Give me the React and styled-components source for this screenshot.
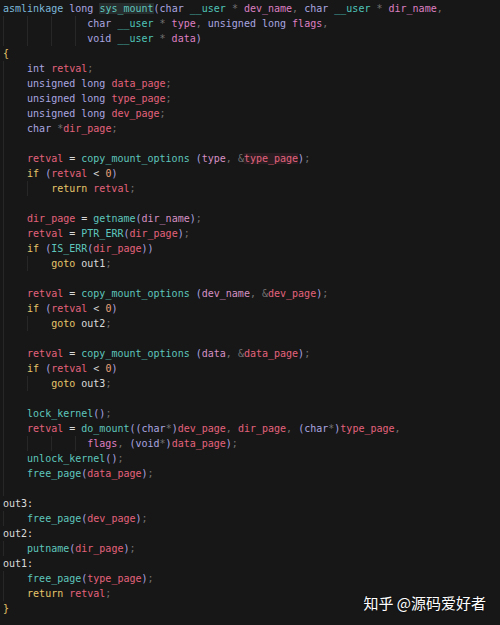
import React from "react";
import styled, { createGlobalStyle } from "styled-components";

const Global = createGlobalStyle`
  html, body { margin: 0; padding: 0; background: #171717; }
  body { width: 500px; height: 625px; overflow: hidden; }
`;

const COLORS = {
  a: "#7db8da",
  k: "#aaa6e0",
  u: "#4fc4b8",
  y: "#e6c66a",
  f: "#5ec6bc",
  pa: "#de7fc2",
  arg: "#d690c4",
  v: "#e3627c",
  l: "#dcdcdc",
  n: "#e8a47a",
  o: "#d8d8d8",
  p: "#aaa6e0",
  g: "#727272",
  t: "#cfcfcf",
};

const Frame = styled.div`
  position: relative;
  width: 500px;
  height: 625px;
  background: #171717;
  overflow: hidden;
`;

const Code = styled.div`
  display: flex;
  flex-direction: column;
  padding: 1px 0 0 3px;
  font-family: "DejaVu Sans Mono", "Liberation Mono", monospace;
  font-size: 10px;
  color: #cfcfcf;
`;

const Line = styled.div`
  height: 15px;
  line-height: 15px;
  white-space: pre;
`;

const Guide = styled.span`
  display: inline-block;
  vertical-align: top;
  height: 15px;
  width: ${(p) => p.$cols}ch;
  box-shadow: inset 1px 0 0 #272727;
`;

const Tok = styled.span`
  color: ${(p) => COLORS[p.$c] || "#cfcfcf"};
  background: ${(p) => p.$hl || "transparent"};
`;

const Watermark = styled.div`
  position: absolute;
  right: 14px;
  bottom: 12px;
  font-family: "Noto Sans CJK SC", "Noto Sans", sans-serif;
  font-size: 15px;
  line-height: 20px;
  color: #ffffff;
  text-shadow: 0 0 2px rgba(0, 0, 0, 0.7);
  white-space: pre;
`;

const SRC = [
  "asmlinkage long sys_mount(char __user * dev_name, char __user * dir_name,",
  "              char __user * type, unsigned long flags,",
  "              void __user * data)",
  "{",
  "    int retval;",
  "    unsigned long data_page;",
  "    unsigned long type_page;",
  "    unsigned long dev_page;",
  "    char *dir_page;",
  "    ",
  "    retval = copy_mount_options (type, &type_page);",
  "    if (retval < 0)",
  "        return retval;",
  "    ",
  "    dir_page = getname(dir_name);",
  "    retval = PTR_ERR(dir_page);",
  "    if (IS_ERR(dir_page))",
  "        goto out1;",
  "    ",
  "    retval = copy_mount_options (dev_name, &dev_page);",
  "    if (retval < 0)",
  "        goto out2;",
  "    ",
  "    retval = copy_mount_options (data, &data_page);",
  "    if (retval < 0)",
  "        goto out3;",
  "    ",
  "    lock_kernel();",
  "    retval = do_mount((char*)dev_page, dir_page, (char*)type_page,",
  "              flags, (void*)data_page);",
  "    unlock_kernel();",
  "    free_page(data_page);",
  "    ",
  "out3:",
  "    free_page(dev_page);",
  "out2:",
  "    putname(dir_page);",
  "out1:",
  "    free_page(type_page);",
  "    return retval;",
  "}",
];

const KW = new Set(["long", "char", "int", "unsigned", "void"]);
const YEL = new Set(["if", "return", "goto"]);
const PARAMS = new Set(["dev_name", "dir_name", "type", "flags", "data"]);
const VARS = new Set(["retval", "data_page", "type_page", "dev_page", "dir_page"]);

function tokenize(text, lineIdx) {
  const re = /([A-Za-z_][A-Za-z0-9_]*:?)|(\d+)|(\s+)|(.)/g;
  const out = [];
  let m;
  while ((m = re.exec(text))) {
    const s = m[0];
    let c = "t";
    let hl;
    if (m[1]) {
      const rest = text.slice(re.lastIndex);
      const isCall = /^\s*\(/.test(rest);
      if (s.endsWith(":")) c = "l";
      else if (s === "asmlinkage") c = "a";
      else if (s === "__user") c = "u";
      else if (KW.has(s)) c = "k";
      else if (YEL.has(s)) c = "y";
      else if (/^out\d$/.test(s)) c = "l";
      else if (VARS.has(s)) c = "v";
      else if (PARAMS.has(s)) c = lineIdx < 3 || s === "flags" ? "pa" : "arg";
      else if (isCall) c = "f";
      if (lineIdx === 0 && s === "sys_mount") hl = "#272c2c";
      if (lineIdx === 10 && s === "type_page") hl = "#2a1d22";
    } else if (m[2]) c = "n";
    else if (m[3]) c = "t";
    else if (s === "{" || s === "}") c = "y";
    else if (s === "(" || s === ")") c = "p";
    else if (s === "=" || s === "<") c = "o";
    else c = "g";
    out.push({ s, c, hl });
  }
  return out;
}

function CodeLine({ text, idx }) {
  const indent = text.length - text.trimStart().length;
  const body = text.slice(indent);
  const guides = [];
  for (let s = 0; s < indent; s += 4) {
    guides.push(<Guide key={s} $cols={Math.min(4, indent - s)} />);
  }
  return (
    <Line>
      {guides}
      {tokenize(body, idx).map((t, i) => (
        <Tok key={i} $c={t.c} $hl={t.hl}>
          {t.s}
        </Tok>
      ))}
      {body.length === 0 && indent === 0 ? " " : null}
    </Line>
  );
}

export default function App() {
  return (
    <Frame>
      <Global />
      <Code>
        {SRC.map((t, i) => (
          <CodeLine key={i} text={t} idx={i} />
        ))}
      </Code>
      <Watermark>知乎 @源码爱好者</Watermark>
    </Frame>
  );
}
